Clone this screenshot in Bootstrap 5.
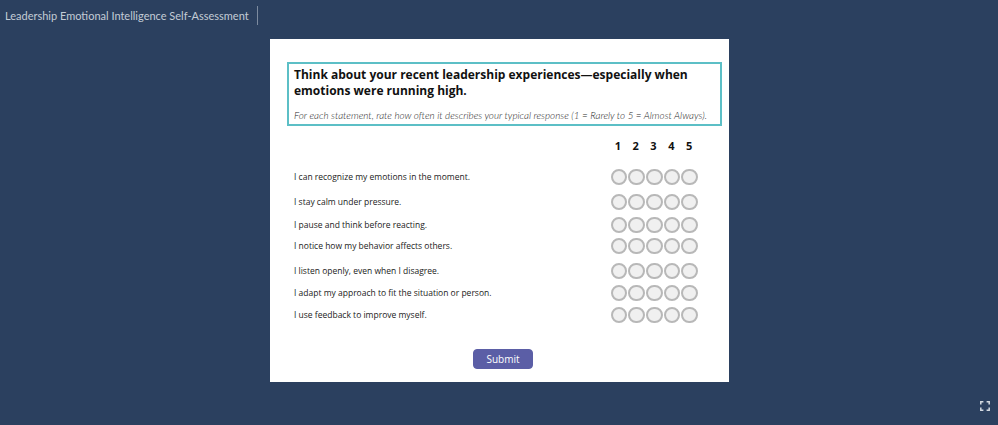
<!DOCTYPE html>
<html lang="en">
<head>
<meta charset="utf-8">
<title>Leadership Emotional Intelligence Self-Assessment</title>
<link rel="stylesheet" href="https://cdn.jsdelivr.net/npm/bootstrap@5.3.0/dist/css/bootstrap.min.css">
<style>
html,body{height:100%;}
body{background:#2b405f;font-family:"Open Sans","Liberation Sans",sans-serif;overflow:hidden;}
.stage{height:425px;position:relative;}
.topbar{height:39px;padding-left:5px;}
.deck-title{font-family:Lato,"Liberation Sans",sans-serif;font-size:11px;color:#c3ccd6;line-height:31px;height:31px;}
.deck-rule{width:1px;height:19px;background:#7d8b9f;margin-left:8px;margin-top:6px;}
.slide{width:459px;height:343px;background:#fff;margin-left:270px;padding:23px 7px 0 17px;}
.intro{border:2px solid #5cbfc6;height:64px;padding:3px 5px 0 5px;}
.intro-head{font-size:12px;font-weight:700;line-height:16px;color:#111;}
.intro-sub{font-family:Lato,"Liberation Sans",sans-serif;font-style:italic;font-weight:300;font-size:9.9px;line-height:14px;color:#1f1f1f;margin-top:9px;white-space:nowrap;}
.scale-head{margin-top:13px;height:14px;padding-left:322px;}
.scale-head span{width:17.8px;text-align:center;font-size:11px;font-weight:700;line-height:14px;color:#111;}
.q-row{height:22px;padding-left:7px;}
.q-text{width:316.7px;font-size:8.5px;color:#222;line-height:22px;white-space:nowrap;}
.dots{gap:1.17px;}
.form-check-input.dot{width:16.5px;height:16.5px;margin:0;background-color:#f0f0f0;border:2px solid #b8b8b8;flex:none;}
.q-list{margin-top:13px;}
.gap-a{margin-top:3px;}
.gap-b{margin-top:1px;}
.gap-c{margin-top:-1px;}
.send-wrap{margin-top:23px;margin-left:-10px;margin-right:-7px;}
.send{background:#5b5ea6;border:1px solid #5b5ea6;color:#fff;font-size:10px;width:60px;height:20px;padding:0;line-height:18px;border-radius:4px;}
.full-icon{position:absolute;left:980px;top:401px;}
</style>
</head>
<body>
<div class="stage">
  <div class="topbar d-flex align-items-start">
    <div class="deck-title">Leadership Emotional Intelligence Self-Assessment</div>
    <div class="deck-rule"></div>
  </div>
  <main class="slide">
    <section class="intro">
      <div class="intro-head">Think about your recent leadership experiences—especially when emotions were running high.</div>
      <div class="intro-sub">For each statement, rate how often it describes your typical response (1 = Rarely to 5 = Almost Always).</div>
    </section>
    <div class="scale-head d-flex"><span>1</span><span>2</span><span>3</span><span>4</span><span>5</span></div>
    <form class="q-list">
      <div class="q-row d-flex align-items-center"><div class="q-text">I can recognize my emotions in the moment.</div><div class="dots d-flex"><input class="form-check-input dot" type="radio" name="a1"><input class="form-check-input dot" type="radio" name="a1"><input class="form-check-input dot" type="radio" name="a1"><input class="form-check-input dot" type="radio" name="a1"><input class="form-check-input dot" type="radio" name="a1"></div></div>
      <div class="q-row gap-a d-flex align-items-center"><div class="q-text">I stay calm under pressure.</div><div class="dots d-flex"><input class="form-check-input dot" type="radio" name="a2"><input class="form-check-input dot" type="radio" name="a2"><input class="form-check-input dot" type="radio" name="a2"><input class="form-check-input dot" type="radio" name="a2"><input class="form-check-input dot" type="radio" name="a2"></div></div>
      <div class="q-row gap-b d-flex align-items-center"><div class="q-text">I pause and think before reacting.</div><div class="dots d-flex"><input class="form-check-input dot" type="radio" name="a3"><input class="form-check-input dot" type="radio" name="a3"><input class="form-check-input dot" type="radio" name="a3"><input class="form-check-input dot" type="radio" name="a3"><input class="form-check-input dot" type="radio" name="a3"></div></div>
      <div class="q-row gap-c d-flex align-items-center"><div class="q-text">I notice how my behavior affects others.</div><div class="dots d-flex"><input class="form-check-input dot" type="radio" name="a4"><input class="form-check-input dot" type="radio" name="a4"><input class="form-check-input dot" type="radio" name="a4"><input class="form-check-input dot" type="radio" name="a4"><input class="form-check-input dot" type="radio" name="a4"></div></div>
      <div class="q-row gap-a d-flex align-items-center"><div class="q-text">I listen openly, even when I disagree.</div><div class="dots d-flex"><input class="form-check-input dot" type="radio" name="a5"><input class="form-check-input dot" type="radio" name="a5"><input class="form-check-input dot" type="radio" name="a5"><input class="form-check-input dot" type="radio" name="a5"><input class="form-check-input dot" type="radio" name="a5"></div></div>
      <div class="q-row d-flex align-items-center"><div class="q-text">I adapt my approach to fit the situation or person.</div><div class="dots d-flex"><input class="form-check-input dot" type="radio" name="a6"><input class="form-check-input dot" type="radio" name="a6"><input class="form-check-input dot" type="radio" name="a6"><input class="form-check-input dot" type="radio" name="a6"><input class="form-check-input dot" type="radio" name="a6"></div></div>
      <div class="q-row d-flex align-items-center"><div class="q-text">I use feedback to improve myself.</div><div class="dots d-flex"><input class="form-check-input dot" type="radio" name="a7"><input class="form-check-input dot" type="radio" name="a7"><input class="form-check-input dot" type="radio" name="a7"><input class="form-check-input dot" type="radio" name="a7"><input class="form-check-input dot" type="radio" name="a7"></div></div>
      <div class="send-wrap d-flex justify-content-center"><button type="button" class="btn send">Submit</button></div>
    </form>
  </main>
  <svg class="full-icon" width="10" height="10" viewBox="0 0 10 10" fill="none" stroke="#d5dbe2" stroke-width="1.5"><path d="M.8 3.4V.8h2.6M6.6.8h2.6v2.6M9.2 6.6v2.6H6.6M3.4 9.2H.8V6.6"/></svg>
</div>
<script src="https://cdn.jsdelivr.net/npm/bootstrap@5.3.0/dist/js/bootstrap.bundle.min.js"></script>
</body>
</html>
